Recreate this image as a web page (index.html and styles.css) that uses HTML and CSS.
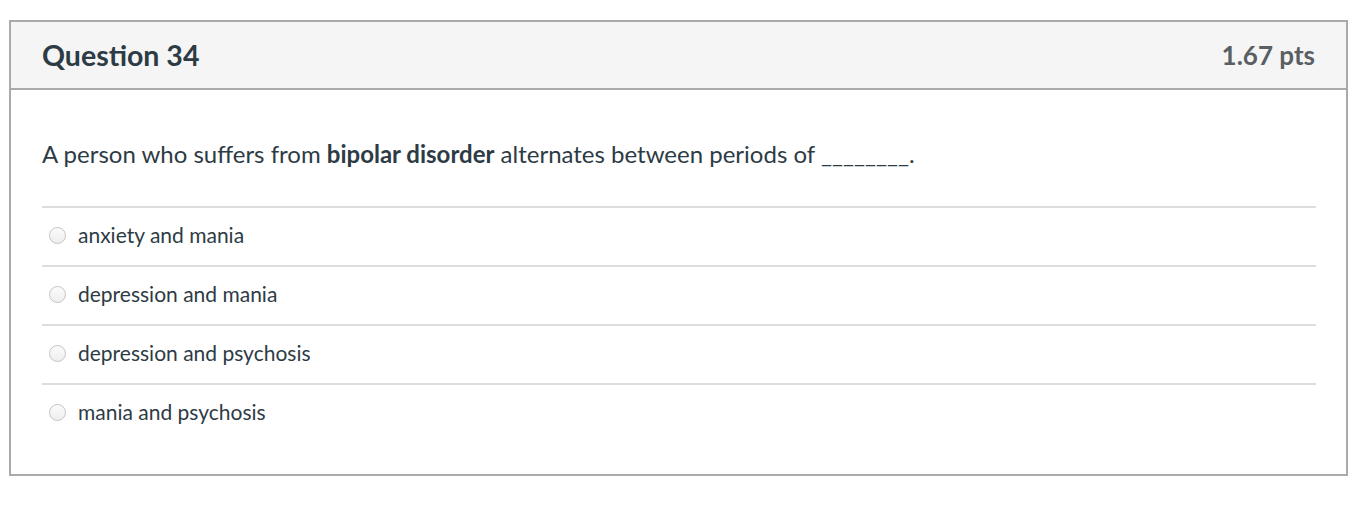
FILE: index.html
```html
<!DOCTYPE html>
<html>
<head>
<meta charset="utf-8">
<link rel="stylesheet" href="styles.css">
</head>
<body>
<div class="question">
  <div class="header">
    <h2 class="title">Question 34</h2>
    <span class="pts">1.67 pts</span>
  </div>
  <div class="content">
    <p class="text">A person who suffers from <strong>bipolar disorder</strong> alternates between periods of ________.</p>
    <div class="answers">
      <label class="answer"><span class="radio"></span><span>anxiety and mania</span></label>
      <label class="answer"><span class="radio"></span><span>depression and mania</span></label>
      <label class="answer"><span class="radio"></span><span>depression and psychosis</span></label>
      <label class="answer"><span class="radio"></span><span>mania and psychosis</span></label>
    </div>
  </div>
</div>
</body>
</html>
```
FILE: styles.css
```css
html, body {
  margin: 0;
  padding: 0;
  background: #fff;
}
body {
  padding: 20px 22px 0 9px;
  font-family: Lato, "Liberation Sans", sans-serif;
  color: #2d3b45;
}
.question {
  border: 2px solid #aaaaaa;
  width: 1339px;
  box-sizing: border-box;
}
.header {
  display: flex;
  justify-content: space-between;
  align-items: center;
  background: #f5f5f5;
  border-bottom: 2px solid #aaaaaa;
  height: 68px;
  box-sizing: border-box;
  padding: 0 31px 0 31px;
}
.title {
  margin: 0;
  font-size: 28.5px;
  font-weight: 700;
  color: #2d3b45;
}
.pts {
  font-size: 26px;
  font-weight: 700;
  color: #5a5f64;
}
.content {
  padding: 0 30px 32px 31px;
}
.text {
  margin: 0;
  padding: 50px 0 38px;
  font-size: 24px;
  line-height: 28px;
}
.answer {
  display: flex;
  align-items: center;
  height: 53px;
  padding-bottom: 4px;
  border-top: 2px solid #dddddd;
  font-size: 21px;
}
.radio {
  flex: none;
  width: 17px;
  height: 17px;
  border: 1px solid #c4c4c4;
  border-radius: 50%;
  box-sizing: border-box;
  background: linear-gradient(#fbfbfb, #eeeeee);
  margin: 2px 12px 0 7px;
}
```
